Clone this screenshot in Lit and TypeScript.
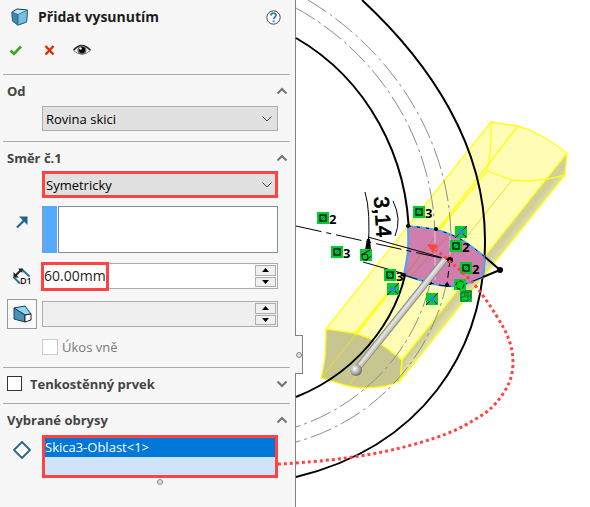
import { LitElement, html, svg, css } from "lit";
import { customElement, state } from "lit/decorators.js";

type Point = [number, number];

/** Smooth cubic path through every point (Catmull-Rom). */
function smooth(points: Point[], start = "M"): string {
  let d = `${start}${points[0][0]} ${points[0][1]}`;
  for (let i = 0; i < points.length - 1; i++) {
    const a = points[Math.max(i - 1, 0)];
    const b = points[i];
    const c = points[i + 1];
    const e = points[Math.min(i + 2, points.length - 1)];
    const x1 = b[0] + (c[0] - a[0]) / 6;
    const y1 = b[1] + (c[1] - a[1]) / 6;
    const x2 = c[0] - (e[0] - b[0]) / 6;
    const y2 = c[1] - (e[1] - b[1]) / 6;
    d += `C${x1.toFixed(2)} ${y1.toFixed(2)} ${x2.toFixed(2)} ${y2.toFixed(2)} ${c[0]} ${c[1]}`;
  }
  return d;
}

const outerEdge = "M362 0C431 64 485 146 485 240C485 354 420 447 296 477";
const innerEdge = "M296 38C367 79 409 157 409 240C409 310 361 371 296 397";
const outerCentre = "M308 0C393 51 451 141 451 240C451 335 387 417 296 442";
const innerCentre = "M296 8C381 55 435 143 435 240C435 326 378 400 296 427";

const farTop: Point[] = [[518, 126], [532, 131], [550, 141], [567, 153]];
const farBottom: Point[] = [[565, 175], [547, 179], [527, 181], [512, 180]];
const nearTop: Point[] = [[326, 329], [357, 334], [379, 343], [402, 360]];
const nearBottom: Point[] = [[400, 381], [386, 386], [363, 388], [348, 386], [321, 378]];
const nearLeft: Point[] = [[321, 378], [325, 357], [326, 329]];

const sketchTop: Point[] = [[408, 226], [437, 230], [462, 240], [485, 257]];
const sketchBottom: Point[] = [[483, 277], [462, 285], [447, 286], [430, 283], [404, 275]];
const sketchLeft: Point[] = [[404, 275], [408, 250], [408, 226]];
const sketchPath = smooth(sketchTop) + smooth(sketchBottom, "L") + smooth(sketchLeft, "L") + "Z";
const nearPath = smooth(nearTop) + smooth(nearBottom, "L") + smooth(nearLeft, "L") + "Z";

const callout: Point[] = [[278, 464], [296, 463], [346, 458], [396, 449], [446, 434], [479, 417], [496, 403], [509, 383], [513, 362], [509, 340], [496, 315], [473, 283], [447, 259], [436, 250]];

const equalMarks: { x: number; y: number; n: string }[] = [
  { x: 317, y: 212, n: "2" },
  { x: 331, y: 246, n: "3" },
  { x: 413, y: 206, n: "3" },
  { x: 384, y: 269, n: "3" },
  { x: 450, y: 240, n: "2" },
  { x: 460, y: 262, n: "2" },
];
const pointMarks: Point[] = [[387, 283], [426, 293], [455, 226]];

@customElement("model-view")
class ModelView extends LitElement {
  static styles = css`
    :host { display: block; position: relative; }
    .scene { display: block; width: 100%; height: 100%; min-height: 507px; overflow: visible; }
    .edge { fill: none; stroke: #000; stroke-width: 2; }
    .centre { fill: none; stroke: #8c8c8c; stroke-width: 1; stroke-dasharray: 22 4 3 4; }
    .thin { fill: none; stroke: #000; stroke-width: 1; }
    .line { fill: none; stroke: #ffff12; stroke-width: 1.3; stroke-linejoin: round; }
    .body { fill: #fffdb5; }
    .near { fill: #c8c690; }
    .inside { fill: none; stroke: #e6e02c; stroke-width: 1; }
    .region { fill: #cf7ead; stroke: #4ba3f5; stroke-width: 2; stroke-linejoin: round; }
    .callout { fill: none; stroke: #ff4242; stroke-width: 3; stroke-dasharray: 3 3; }
    .head { fill: #ff4242; }
    .count { font: bold 13px "Noto Sans", sans-serif; fill: #000; }
    .dimension { font: 500 21px "Liberation Sans", sans-serif; fill: #000; stroke: #000; stroke-width: 0.8; }
  `;

  render() {
    return html`
      <svg class="scene" viewBox="296 0 294 507" preserveAspectRatio="xMinYMin meet" role="img" aria-label="3D">
        <defs>
          <linearGradient id="side" gradientUnits="userSpaceOnUse" x1="470" y1="258" x2="492" y2="276">
            <stop offset="0" stop-color="#d9d7a2" /><stop offset=".5" stop-color="#cfcd98" /><stop offset="1" stop-color="#f4f2b8" />
          </linearGradient>
          <radialGradient id="ball" cx=".4" cy=".4" r=".7">
            <stop offset="0" stop-color="#fff" /><stop offset=".45" stop-color="#bbb" /><stop offset="1" stop-color="#555" />
          </radialGradient>
        </defs>
        <path class="body" d="M326 329L491 122L518 126${smooth(farTop).replace("M518 126", "")}L565 175L400 381L360 386Z" />
        <path fill="url(#side)" d="M567 153L565 175L400 381L402 360Z" />
        <path class="near" d=${nearPath} />
        <g class="inside">
          <path d="M321 378L487 171M348 386L512 180M357 334L518 126" />
        </g>
        <g class="line">
          <path d="M326 329L491 122L518 126L357 334M567 153L402 360L400 381L565 175L567 153M491 122Q491 158 487 171L512 180M487 171L354 334" />
          <path d=${smooth(farTop)} /><path d=${smooth(farBottom)} /><path d=${nearPath} />
        </g>
        <path class="centre" d=${outerCentre} />
        <path class="centre" d=${innerCentre} />
        <path class="edge" d=${outerEdge} />
        <path class="edge" d=${innerEdge} />

        <path class="region" d=${sketchPath} />
        <path d="M406 274L434 238M410 277L450 234M448 260L462 242" fill="none" stroke="#c08050" />
        <path d="M435 231V280M450 236V258" fill="none" stroke="#e8c4d8" stroke-dasharray="12 4 3 4" />
        <path class="thin" d=${smooth(sketchTop)} stroke-dasharray="3 6" />
        <path class="thin" d=${smooth(sketchBottom)} stroke-dasharray="12 5" />
        <path class="thin" d="M296 226L450 260" stroke-dasharray="26 5 5 5" />
        <path class="thin" d="M368 237L447 259M363 262L405 274" />
        <path class="thin" d="M450 260L447 284" stroke-dasharray="7 4" />
        <path class="edge" d="M485 257L500 270L483 277" />
        <circle cx="500" cy="270" r="3" /><circle cx="450" cy="260" r="3" />
        <circle cx="436" cy="229" r="2" /><circle cx="447" cy="285" r="2" /><circle cx="430" cy="283" r="2" />
        <circle cx="404" cy="275" r="2" /><circle cx="408" cy="226" r="2" />

        <path d="M356 370L445 259" fill="none" stroke="#8e8e8e" stroke-width="7" />
        <path d="M356 370L445 259" fill="none" stroke="#c9c9c9" stroke-width="5" />
        <path d="M356 369L445 258" fill="none" stroke="#e2e2e2" stroke-width="2" />
        <circle cx="356" cy="370" r="6" fill="url(#ball)" />

        <path class="thin" d="M365 192Q371 212 368 250M393 201Q402 219 395 236" />
        <path d="M367 239H370L371 250H365Z" />
        <text class="dimension" transform="translate(374 197) rotate(86)">3,14</text>

        ${equalMarks.map(
          (m) => svg`
            <rect x=${m.x} y=${m.y} width="12" height="12" fill="#00cc33" />
            <rect x=${m.x + 3} y=${m.y + 3} width="6" height="6" fill="none" stroke="#000" stroke-width="1.2" />
            <path d=${`M${m.x + 4} ${m.y + 8}l4 -4`} stroke="#2349d8" fill="none" />
            <text class="count" x=${m.x + 12} y=${m.y + 12}>${m.n}</text>`
        )}
        ${pointMarks.map(
          ([x, y]) => svg`
            <rect x=${x} y=${y} width="12" height="12" fill="#00cc33" />
            <path d=${`M${x + 12} ${y}L${x} ${y + 12}M${x + 6} ${y + 6}l5 5`} stroke="#000" fill="none" />
            <circle cx=${x + 6} cy=${y + 6} r="2.5" fill="#3b7cf2" />`
        )}
        <rect x="360" y="249" width="12" height="12" fill="#00cc33" />
        <circle cx="365" cy="257" r="3" fill="none" stroke="#000" /><path d="M361 255L370 250M366 261L371 256" stroke="#000" />
        <rect x="454" y="279" width="12" height="11" fill="#00cc33" />
        <circle cx="460" cy="285" r="4" fill="none" stroke="#000" stroke-dasharray="4 2" />
        <rect x="460" y="290" width="12" height="12" fill="#00cc33" />
        <path d="M461 293l4 -2h6v7l-3 3h-7zM461 293h7v8M468 293l3 -2M461 298l4 -2h6M465 291v5" stroke="#176b2b" fill="none" />
        <path class="callout" d=${smooth(callout)} />
        <path class="head" d="M427 244L438 245L433 253Z" />
      </svg>
    `;
  }
}

const chevron = (open: boolean) => svg`
  <svg class="chevron" viewBox="0 0 12 8" aria-hidden="true">
    <path d=${open ? "M1.5 6.5L6 2L10.500 6.5" : "M1.5 1.500L6 6L10.500 1.500"} />
  </svg>`;

@customElement("app-root")
class AppRoot extends LitElement {
  @state() private thin = false;

  static styles = css`
    :host {
      display: grid; grid-template-columns: 296px 1fr; min-height: 100vh; background: #fff;
      font: 13px/18px "Open Sans", "Noto Sans", sans-serif; color: #1c1c1c;
    }
    *, ::before { box-sizing: border-box; }
    button, input, select { font: inherit; color: inherit; margin: 0; padding: 0; border-radius: 0; }
    svg { display: block; }
    .panel { position: relative; background: #f7f7f7; border-right: 1px solid #828282; padding: 0 5px 0 3px; }
    .title { display: flex; align-items: center; height: 34px; padding: 0 9px 0 8px; }
    .title h1 { flex: 1; margin: 0 0 0 9px; font-size: 14px; font-weight: 700; }
    .icon { border: 0; background: none; display: grid; place-items: center; }
    .actions { display: flex; align-items: center; gap: 16px; height: 40px; padding: 0 0 8px 4px; }
    .section { border-top: 1px solid #ababab; padding: 0 0 10px 4px; }
    .section.folded { padding-bottom: 4px; }
    .head { display: flex; align-items: center; height: 31px; padding-right: 2px; color: #444; }
    .head h2 { flex: 1; margin: 0; font-size: 13px; font-weight: 700; }
    .head label { display: flex; align-items: center; gap: 8px; }
    .chevron { width: 12px; height: 8px; fill: none; stroke: #737373; stroke-width: 2; }
    .rows { display: grid; gap: 8px; }
    .row { display: grid; grid-template-columns: 30px 1fr; column-gap: 5px; padding-right: 12px; align-items: center; }
    .row > .glyph { justify-self: center; }
    .row.tall { min-height: 30px; }
    .wide { grid-column: 2; }
    .pick { position: relative; display: grid; align-items: center; }
    .pick select {
      width: 100%; height: 25px; padding-left: 3px; appearance: none;
      border: 1px solid #adadad; background: #e1e1e1; color: #000;
    }
    .pick .chevron { position: absolute; right: 5px; stroke: #444; stroke-width: 1; }
    .marked { margin-top: -2px; }
    .marked select { height: 27px; padding-left: 1px; border: 3px solid #ff4242; }
    .direction { display: flex; gap: 1px; height: 47px; }
    .swatch { width: 15px; background: #55aaff; border-left: 1px solid #999; }
    .entry { flex: 1; min-width: 0; border: 1px solid #7f8aa3; background: #fff; }
    .field { position: relative; display: flex; height: 26px; border: 1px solid #ababb0; background: #fff; padding-right: 1px; }
    .field.off { background: #efefef; }
    .field input { flex: 1; min-width: 0; border: 0; background: none; padding-left: 1px; font-size: 14px; }
    .field.ring::before { content: ""; position: absolute; left: -2px; top: -2px; width: 68px; height: 29px; border: 3px solid #ff4242; pointer-events: none; }
    .spin { display: grid; gap: 1px; width: 21px; padding: 1px 0; }
    .spin button { display: grid; place-items: center; border: 1px solid #adadad; background: #f0f0f0; }
    .spin svg { width: 7px; height: 4px; fill: #000; }
    .tile { width: 30px; height: 30px; border: 1px solid #999; background: #f9f9f9; display: grid; place-items: center; }
    .check { display: flex; align-items: center; gap: 4px; height: 20px; color: #777; }
    .box { appearance: none; width: 15px; height: 15px; border: 1px solid #333; background: #fff; }
    .box.pale { width: 16px; height: 16px; border-color: #ccc; }
    .box:checked { background: #0078d7; }
    .list { margin: 0; padding: 0; list-style: none; height: 43px; border: 3px solid #ff4242; background: #cfe4f9; }
    .list li { height: 19px; background: #0078d7; color: #fff; line-height: 18px; }
    .contours { align-items: start; }
    .contours .glyph { margin-top: 5px; }
    .grip { display: block; width: 6px; height: 6px; margin: 1px auto 0; border: 1px solid #8a8a8a; border-radius: 50%; background: #ddd; }
    .contours .grip { grid-column: 2; }
    .tab { position: absolute; left: 100%; top: 335px; width: 8px; height: 39px; background: #f7f7f7; border: 1px solid #828282; border-left: 0; display: grid; place-items: center; z-index: 2; }
    .tab .grip { margin: 0; }
  `;

  private spinner() {
    return html`<span class="spin">
      <button aria-label="+"><svg viewBox="0 0 7 4"><path d="M0 4L3.500 0L7 4Z" /></svg></button>
      <button aria-label="−"><svg viewBox="0 0 7 4"><path d="M0 0L3.500 4L7 0Z" /></svg></button>
    </span>`;
  }

  render() {
    return html`
      <aside class="panel">
        <header>
          <div class="title">
            <svg width="18" height="18" viewBox="0 0 18 18" aria-hidden="true">
              <path d="M1 4L6 1L16.500 2L15.500 14L7 17L1.500 13Z" fill="#b6e6f7" stroke="#123c55" />
              <path d="M1 4L7 6.500L7 17L1.500 13Z" fill="#3f87a8" stroke="#2b6482" stroke-width=".8" />
              <path d="M7 6.500L16.500 2L15.500 14L7 17Z" fill="#78bddb" stroke="#2b6482" stroke-width=".8" />
            </svg>
            <h1>Přidat vysunutím</h1>
            <button class="icon" aria-label="Nápověda">
              <svg width="15" height="15" viewBox="0 0 15 15">
                <circle cx="7.500" cy="7.500" r="6.700" fill="#fff" stroke="#4a4a4a" />
                <path d="M5 5.500C5 2.500 10 2.500 10 5.300C10 7 7.600 7.200 7.600 9.300M7.600 10.500V12.200" fill="none" stroke="#2b7fa8" stroke-width="1.800" />
              </svg>
            </button>
          </div>
          <div class="actions">
            <button class="icon" aria-label="OK">
              <svg width="18" height="14" viewBox="0 0 18 14"><path d="M3.500 7.500L7 11L14 3.500" fill="none" stroke="#3fa51f" stroke-width="2.600" /></svg>
            </button>
            <button class="icon" aria-label="Storno">
              <svg width="16" height="14" viewBox="0 0 16 14"><path d="M4.500 3L12.500 11.500M12.500 3L4.500 11.500" fill="none" stroke="#e02a00" stroke-width="2.400" /></svg>
            </button>
            <button class="icon" aria-label="Náhled">
              <svg width="18" height="14" viewBox="0 0 18 14">
                <path d="M.5 7.500Q8.500 -1.500 17.500 7.500Q9 15 .5 7.500Z" fill="#fff" stroke="#777" />
                <path d="M.5 7Q8.500 -2 17.500 7" fill="none" stroke="#222" stroke-width="1.400" />
                <circle cx="9" cy="7" r="4.600" fill="#666" /><circle cx="9" cy="7" r="3" fill="#000" /><circle cx="7.500" cy="5.500" r="1.200" fill="#fff" />
              </svg>
            </button>
          </div>
        </header>

        <section class="section">
          <div class="head"><h2>Od</h2><button class="icon" aria-label="Od">${chevron(true)}</button></div>
          <div class="row">
            <div class="pick wide">
              <select aria-label="Od"><option>Rovina skici</option></select>${chevron(false)}
            </div>
          </div>
        </section>

        <section class="section">
          <div class="head"><h2>Směr č.1</h2><button class="icon" aria-label="Směr č.1">${chevron(true)}</button></div>
          <div class="rows">
            <div class="row">
              <div class="pick wide marked">
                <select aria-label="Směr č.1"><option>Symetricky</option></select>${chevron(false)}
              </div>
            </div>
            <div class="row">
              <svg class="glyph" width="14" height="30" viewBox="0 0 14 30" aria-hidden="true">
                <path d="M2 12.500L9 5.500" stroke="#1d6288" stroke-width="2.200" /><path d="M4 1.500H12.500V10Z" fill="#1d6288" />
              </svg>
              <div class="direction"><span class="swatch"></span><input class="entry" aria-label="Směr vysunutí" /></div>
            </div>
            <div class="row tall">
              <svg class="glyph" width="20" height="19" viewBox="0 0 20 19" aria-hidden="true">
                <path d="M1.500 10L8 16.500M9.500 2L17.500 9.500" fill="none" stroke="#2a7396" stroke-width="2" />
                <path d="M3 9L9.500 2.500" stroke="#222" stroke-width="2" /><path d="M1.500 5V10.500H7ZM6 1.500H10.500V6Z" fill="#222" />
                <text x="8" y="17" font-size="9" font-weight="600" fill="#111">D1</text>
              </svg>
              <div class="field ring"><input aria-label="Hloubka" value="60.00mm" />${this.spinner()}</div>
            </div>
            <div class="row">
              <button class="tile" aria-label="Úkos">
                <svg width="19" height="18" viewBox="0 0 19 18">
                  <path d="M1 3L12 1L18 9L12 10Z" fill="#8fd6f2" stroke="#173f58" />
                  <path d="M1 3L12 10V17L1 14Z" fill="#4a92b6" stroke="#173f58" />
                  <path d="M12 10L18 9V15L12 17Z" fill="#fff" stroke="#222" />
                </svg>
              </button>
              <div class="field off"><input aria-label="Úhel úkosu" disabled />${this.spinner()}</div>
            </div>
            <div class="row"><label class="check wide"><input class="box pale" type="checkbox" disabled />Úkos vně</label></div>
          </div>
        </section>

        <section class="section folded">
          <div class="head">
            <h2><label><input class="box" type="checkbox" .checked=${this.thin} @change=${() => (this.thin = !this.thin)} />Tenkostěnný prvek</label></h2>
            <button class="icon" aria-label="Tenkostěnný prvek">${chevron(false)}</button>
          </div>
        </section>

        <section class="section">
          <div class="head"><h2>Vybrané obrysy</h2><button class="icon" aria-label="Vybrané obrysy">${chevron(true)}</button></div>
          <div class="row contours">
            <svg class="glyph" width="20" height="20" viewBox="0 0 20 20" aria-hidden="true">
              <path d="M10 2L18 10L10 18L2 10Z" fill="#fff" stroke="#28688a" stroke-width="1.800" stroke-linejoin="round" />
            </svg>
            <ul class="list"><li>Skica3-Oblast&lt;1&gt;</li></ul>
            <span class="grip"></span>
          </div>
        </section>
        <span class="tab"><span class="grip"></span></span>
      </aside>
      <model-view></model-view>
    `;
  }
}
